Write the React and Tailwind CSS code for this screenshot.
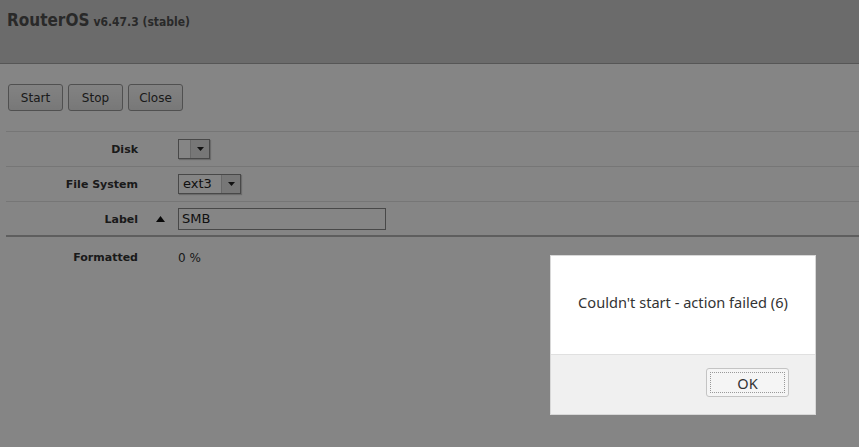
import React from 'react';

const font = { fontFamily: '"DejaVu Sans", Verdana, sans-serif' };

const ToolButton = ({ children }) => (
  <button className="h-[27px] w-[55px] rounded-[3px] border border-[#9a9a9a] bg-gradient-to-b from-[#fafafa] to-[#e6e6e6] pt-[1px] text-[12px] text-[#333]">
    {children}
  </button>
);

const Row = ({ label, marker, children, last }) => (
  <div className={`flex h-[35px] items-center ${last ? 'border-b-2 border-[#b4b4b4]' : 'border-b border-[#e3e3e3]'}`}>
    <div className="w-[132px] pt-[3px] text-right text-[11px] font-bold text-[#333]">{label}</div>
    <div className="flex w-[40px] justify-center pl-[4px]">
      {marker && (
        <svg width="9" height="6" viewBox="0 0 9 6"><path d="M4.5 0L9 6H0z" fill="#111" /></svg>
      )}
    </div>
    {children}
  </div>
);

const Select = ({ value, width }) => (
  <div className={`flex h-[20px] ${width} border border-[#8a8a8a] bg-white shadow-[1px_1px_1px_rgba(0,0,0,0.2)]`}>
    <div className="flex-1 pl-[4px] text-[13px] leading-[18px] text-[#222]">{value}</div>
    <div className="flex w-[19px] items-center justify-center border-l border-[#c8c8c8] bg-[#e4e4e4]">
      <svg width="7" height="4" viewBox="0 0 7 4"><path d="M0 0h7L3.5 4z" fill="#222" /></svg>
    </div>
  </div>
);

export default function App() {
  return (
    <div className="relative min-h-screen overflow-hidden bg-white" style={font}>
      <div className="h-[64px] border-b border-[#a6a6a6] bg-[#cdcdcd] px-[7px] pt-[8px] font-['DejaVu_Sans_Condensed','DejaVu_Sans',sans-serif]">
        <span className="text-[17px] font-bold text-[#505050]">RouterOS</span>
        <span className="ml-[4px] text-[12px] font-bold text-[#505050]">v6.47.3 (stable)</span>
      </div>

      <div className="flex gap-[5px] px-[8px] pt-[20px]">
        <ToolButton>Start</ToolButton>
        <ToolButton>Stop</ToolButton>
        <ToolButton>Close</ToolButton>
      </div>

      <div className="ml-[6px] mt-[20px] border-t border-[#e3e3e3]">
        <Row label="Disk">
          <Select value="" width="w-[32px]" />
        </Row>
        <Row label="File System">
          <Select value="ext3" width="w-[63px]" />
        </Row>
        <Row label="Label" marker last>
          <div className="h-[22px] w-[208px] border border-[#8a8a8a] bg-white pl-[3px] text-[13px] leading-[20px] text-[#222]">SMB</div>
        </Row>
        <div className="flex h-[38px] items-center pt-[4px]">
          <div className="w-[132px] text-right text-[11px] font-bold text-[#333]">Formatted</div>
          <div className="w-[40px]" />
          <div className="text-[12px] text-[#333]">0 %</div>
        </div>
      </div>

      <div className="absolute inset-0 bg-black/[0.48]" />

      <div className="absolute left-[550px] top-[255px] w-[266px] border border-[#d8d8d8] bg-white font-['Noto_Sans','Open_Sans',sans-serif]">
        <div className="flex h-[98px] items-center justify-center pb-[4px] text-[14.6px] text-[#333]">
          Couldn't start - action failed (6)
        </div>
        <div className="flex h-[60px] justify-end border-t border-[#e0e0e0] bg-[#f0f0f0] pr-[26px] pt-[13px]">
          <button className="h-[29px] w-[83px] rounded-[3px] border border-[#c4c4c4] bg-[#f5f5f5] p-[3px]">
            <div className="h-full w-full border border-dotted border-[#999] text-[14.6px] leading-[20px] text-[#333]">OK</div>
          </button>
        </div>
      </div>
    </div>
  );
}
